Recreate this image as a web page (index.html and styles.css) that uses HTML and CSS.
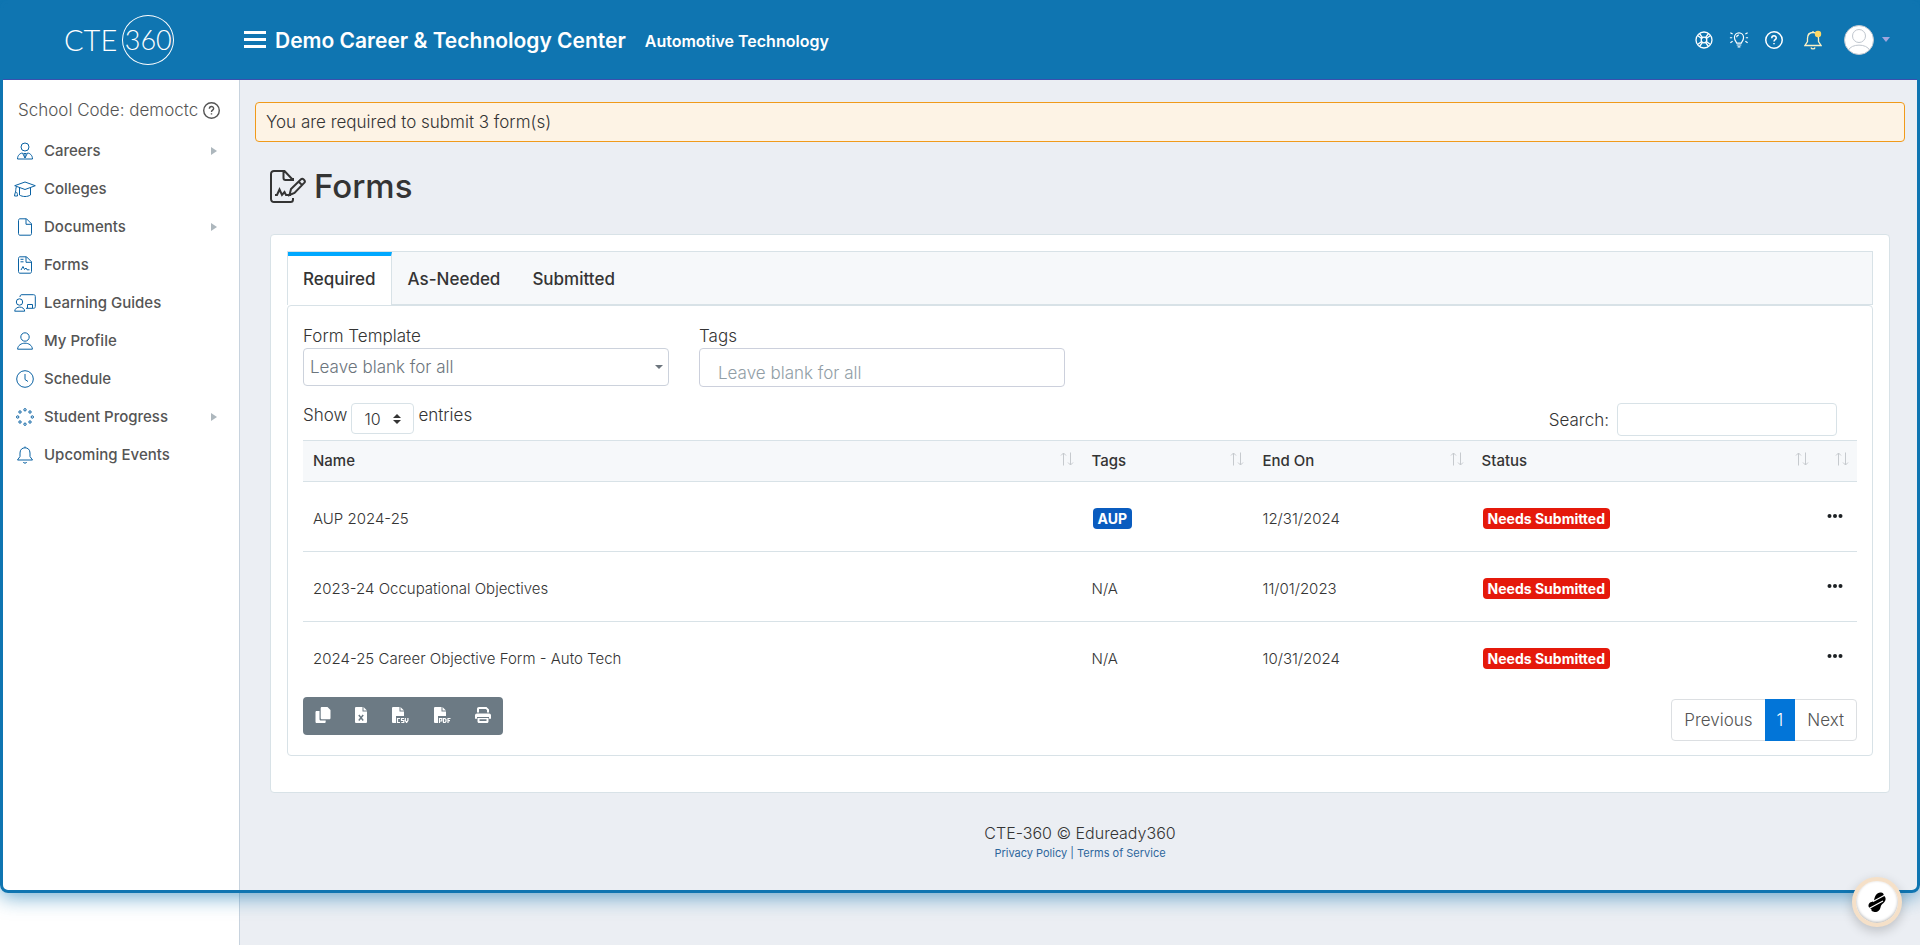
FILE: index.html
```html
<!DOCTYPE html>
<html lang="en">
<head>
    <meta charset="UTF-8">
    <meta name="viewport" content="width=device-width, initial-scale=1.0">
    <title>CTE-360 - Forms</title>
    <link rel="stylesheet" href="styles.css">
</head>
<body>

    <!-- Shared icons -->
    <svg class="sprite" aria-hidden="true">
        <symbol id="i-help" viewBox="0 0 24 24"><circle cx="12" cy="12" r="11"/><path d="M9 9.500c0-4 6-4 6-.3 0 2.400-3 2.300-3 4.800M12 16v1.600"/></symbol>
        <symbol id="i-sort" viewBox="0 0 14 14"><path d="M3.500 13.500V1M1 3.500 3.500 1 6 3.500M10.500 .5V13M8 10.500l2.500 2.500 2.500-2.500"/></symbol>
        <symbol id="i-dots" viewBox="0 0 16 6"><circle cx="2.500" cy="3" r="2"/><circle cx="8" cy="3" r="2"/><circle cx="13.500" cy="3" r="2"/></symbol>
        <symbol id="i-right" viewBox="0 0 6 8"><path d="M0 0l6 4-6 4z"/></symbol>
    </svg>

    <header class="header">
        <a class="logo" href="#"><span>CTE</span><span class="logo-circle">360</span></a>
        <button class="menu-btn" aria-label="Menu"><span></span><span></span><span></span></button>
        <div class="school">Demo Career &amp; Technology Center</div>
        <div class="program">Automotive Technology</div>
        <nav class="header-icons">
            <a href="#" aria-label="Support"><svg class="line" viewBox="0 0 18 18"><circle cx="9" cy="9" r="8"/><circle cx="9" cy="9" r="2.800"/><path d="M2.500 4.500l4.200 3M4.500 2.500l3 4.200M13.500 2.500l-3 4.200M15.500 4.500l-4.200 3M2.500 13.500l4.200-3M4.500 15.500l3-4.200M13.500 15.500l-3-4.200M15.500 13.500l-4.200-3"/></svg></a>
            <a href="#" aria-label="Tips"><svg class="line wide" viewBox="0 0 22 18"><path d="M8.500 12.500C8 10.500 6 9.500 6 6.200a5 5 0 0 1 10 0c0 3.300-2 4.300-2.500 6.300zM8.500 14.500h5M9.500 16.500h3M8.500 6a2.500 2.500 0 0 1 2.500-2.500M1 6.500h2.500M18.500 6.500H21M1.500 1l2.500 1.500M20.500 1 18 2.500M1.500 12 4 10.500M20.500 12 18 10.500"/></svg></a>
            <a href="#" aria-label="Help"><svg class="line help"><use href="#i-help"/></svg></a>
            <a class="bell" href="#" aria-label="Notifications"><svg class="line" viewBox="0 0 18 20"><path d="M1 15.500h16l-2.500-4V8.300C14.500 4.500 12 2.500 9 2.500S3.500 4.500 3.500 8.300v3.200zM9 2.500V1M7 17.500c.4 1.800 3.600 1.800 4 0"/><circle class="dot" cx="14" cy="4" r="3.200"/></svg></a>
            <a class="avatar" href="#" aria-label="Account"><svg viewBox="0 0 30 30"><circle class="avatar-bg" cx="15" cy="15" r="14.500"/><circle cx="15" cy="11" r="6.500"/><path d="M4.500 25c3-6.500 18-6.500 21 0"/></svg><i class="caret"></i></a>
        </nav>
    </header>

    <div class="page">
        <aside class="sidebar">
            <p class="school-code">School Code: democtc <svg><use href="#i-help"/></svg></p>
            <ul class="menu">
                <li><a href="#"><svg viewBox="0 0 22 18"><circle cx="11" cy="5" r="4"/><path d="M3.500 17c0-4 3-6 5-6l2.500 5 2.500-5c2 0 5 2 5 6zM9.500 11.500h3M11 12v4"/></svg>Careers</a><svg class="arrow"><use href="#i-right"/></svg></li>
                <li><a href="#"><svg viewBox="0 0 22 18"><path d="M.7 5.700 11 2l10.300 3.700L11 9.500zM5.500 8v7c3 2 8 2 11 0V8M2.500 6.500c-1 2-.5 4-1 5.500-.7 1.500-.7 2.500-1 4h3c0-2-.3-3-1.200-4"/></svg>Colleges</a></li>
                <li><a href="#"><svg viewBox="0 0 22 18"><path d="M4.500 2.500c0-1 .5-1.700 1.500-1.700h6.500l5 5V15.500c0 1-.5 1.700-1.500 1.700H6c-1 0-1.500-.7-1.500-1.700zM12 .8v5.500h5.500"/></svg>Documents</a><svg class="arrow"><use href="#i-right"/></svg></li>
                <li><a href="#"><svg viewBox="0 0 22 18"><path d="M4.500 2.500c0-1 .5-1.700 1.500-1.700h6.500l5 5V15.500c0 1-.5 1.700-1.500 1.700H6c-1 0-1.500-.7-1.500-1.700zM12 .8v5.500h5.500M6.500 3.300h3M6.500 5.800h3M7 14l2-3.500 1.500 3L12 12l1 1.800h2.500"/></svg>Forms</a></li>
                <li><a href="#"><svg viewBox="0 0 22 18"><path d="M6 3c0-1.500.5-2.300 2-2.300h11.500c1.200 0 1.800.6 1.800 1.800v10c0 1.200-.6 1.800-1.800 1.800H12M13.500 14v-3.500h5V14"/><circle cx="5.500" cy="8" r="3.200"/><path d="M.7 17.200c.5-5.500 9.600-5.500 10 0z"/></svg>Learning Guides</a></li>
                <li><a href="#"><svg viewBox="0 0 22 18"><circle cx="11" cy="5" r="4.200"/><path d="M3.600 17.200c.4-8 14.400-8 14.800 0z"/></svg>My Profile</a></li>
                <li><a href="#"><svg viewBox="0 0 22 18"><circle cx="11" cy="9" r="8.300"/><path d="M11 4v5.500l3 2"/></svg>Schedule</a></li>
                <li><a href="#"><svg viewBox="0 0 22 18"><circle cx="11" cy="1.800" r="1.200"/><circle cx="16" cy="4" r="1.200"/><circle cx="18.300" cy="9" r="1.200"/><circle cx="16" cy="14" r="1.200"/><circle cx="11" cy="16.200" r="1.200"/><circle cx="6" cy="14" r="1.200"/><circle cx="3.700" cy="9" r="1.200"/><circle cx="6" cy="4" r="1.200"/></svg>Student Progress</a><svg class="arrow"><use href="#i-right"/></svg></li>
                <li><a href="#"><svg viewBox="0 0 22 18"><path d="M3.500 14h15L16 10.500V7c0-3.500-2.300-5.200-5-5.200S6 3.500 6 7v3.500zM11 1.800V.5M9.300 16c.3 1.500 3.100 1.500 3.400 0"/></svg>Upcoming Events</a></li>
            </ul>
        </aside>

        <main class="content">
            <div class="alert">You are required to submit 3 form(s)</div>

            <h1 class="title">
                <svg viewBox="0 0 36 33"><path d="M23 8v3M23 28v1.500c0 1.500-1 2.500-2.500 2.500H4c-1.800 0-3-1.200-3-3V4c0-1.800 1.200-3 3-3h10.500L23 10M13.500 1.500V8c0 1.300.8 2 2 2H23M5 25h2l2.500-5.500L12 25l2.500-3 1.500 3h5M19.500 25l1.500-6L31 9.300c1.700-1.600 5 1.500 3.400 3.400L24.500 23zM28.500 11.500l3.600 3.600"/></svg>
                Forms
            </h1>

            <section class="panel">
                <nav class="tabs">
                    <a class="tab active" href="#">Required</a>
                    <a class="tab" href="#">As-Needed</a>
                    <a class="tab" href="#">Submitted</a>
                </nav>

                <div class="tab-body">
                    <div class="filters">
                        <div class="field">
                            <label for="template">Form Template</label>
                            <div class="select">
                                <select id="template"><option>Leave blank for all</option></select>
                                <i class="caret"></i>
                            </div>
                        </div>
                        <div class="field">
                            <label for="tags">Tags</label>
                            <input type="text" id="tags" placeholder="Leave blank for all">
                        </div>
                    </div>

                    <div class="table-top">
                        <div class="length">
                            <label for="length">Show</label>
                            <div class="select small">
                                <select id="length"><option>10</option><option>25</option><option>50</option></select>
                                <svg viewBox="0 0 8 10"><path d="M0 4l4-4 4 4zM0 6h8l-4 4z"/></svg>
                            </div>
                            <span>entries</span>
                        </div>
                        <div class="search">
                            <label for="search">Search:</label>
                            <input type="search" id="search">
                        </div>
                    </div>

                    <table class="table">
                        <thead>
                            <tr>
                                <th class="col-name"><div>Name<svg><use href="#i-sort"/></svg></div></th>
                                <th class="col-tags"><div>Tags<svg><use href="#i-sort"/></svg></div></th>
                                <th class="col-end"><div>End On<svg><use href="#i-sort"/></svg></div></th>
                                <th><div>Status<svg><use href="#i-sort"/></svg></div></th>
                                <th class="col-more"><div><svg><use href="#i-sort"/></svg></div></th>
                            </tr>
                        </thead>
                        <tbody>
                            <tr>
                                <td>AUP 2024-25</td>
                                <td><span class="badge blue">AUP</span></td>
                                <td>12/31/2024</td>
                                <td><span class="badge red">Needs Submitted</span></td>
                                <td><button class="more" aria-label="Actions"><svg><use href="#i-dots"/></svg></button></td>
                            </tr>
                            <tr>
                                <td>2023-24 Occupational Objectives</td>
                                <td>N/A</td>
                                <td>11/01/2023</td>
                                <td><span class="badge red">Needs Submitted</span></td>
                                <td><button class="more" aria-label="Actions"><svg><use href="#i-dots"/></svg></button></td>
                            </tr>
                            <tr>
                                <td>2024-25 Career Objective Form - Auto Tech</td>
                                <td>N/A</td>
                                <td>10/31/2024</td>
                                <td><span class="badge red">Needs Submitted</span></td>
                                <td><button class="more" aria-label="Actions"><svg><use href="#i-dots"/></svg></button></td>
                            </tr>
                        </tbody>
                    </table>

                    <div class="table-bottom">
                        <div class="exports">
                            <button aria-label="Copy"><svg class="w16" viewBox="0 0 16 16"><path d="M7 0h5.500L15.500 3v8c0 .8-.5 1.300-1.300 1.300H7c-.8 0-1.300-.5-1.300-1.300V1.300C5.700.5 6.200 0 7 0zM1.800 4H4.500v8c0 1 .6 1.600 1.600 1.600h4.600v1.100c0 .8-.5 1.300-1.300 1.300H1.800C1 16 .5 15.500.5 14.700V5.300C.5 4.500 1 4 1.800 4z"/></svg></button>
                            <button aria-label="Excel"><svg class="w12" viewBox="2 0 12 16"><path d="M3.300 0H9.500v4.500H14v10.200c0 .8-.5 1.300-1.300 1.300H3.300C2.500 16 2 15.500 2 14.700V1.300C2 .5 2.500 0 3.300 0zM10.500 0 14 3.500h-3.500z"/><path class="cut" d="M5.800 8l4.400 5.500M10.200 8l-4.400 5.500"/></svg></button>
                            <button aria-label="CSV"><svg class="w18" viewBox="0 0 18 16"><path d="M2.300 0H8.500v4.500H13V9H5v7H2.300C1.500 16 1 15.500 1 14.700V1.300C1 .5 1.500 0 2.300 0zM9.500 0 13 3.500H9.500z"/><path class="thin" d="M9 11.500H6.500v4H9M13 11.500h-2.500v2h2.300v2h-2.500M14.300 11v2.500l1.300 2 1.300-2V11"/></svg></button>
                            <button aria-label="PDF"><svg class="w18" viewBox="0 0 18 16"><path d="M2.300 0H8.500v4.500H13V9H5v7H2.300C1.500 16 1 15.500 1 14.700V1.300C1 .5 1.500 0 2.300 0zM9.500 0 13 3.500H9.500z"/><path class="thin" d="M6.500 16v-4.500h2.300v2.500H6.500M10.500 11.500v4H12l1-1v-2l-1-1zM17.500 11.500H15V16M15 13.700h2"/></svg></button>
                            <button aria-label="Print"><svg class="w16" viewBox="0 0 16 16"><path d="M2 5.500V2C2 .8 2.800 0 4 0h7.500L14 2.500v3h-2V3.300L11 2H4v3.500zM2 6.500h12c1.200 0 2 .8 2 2v3.300h-2V10H2v1.800H0V8.500c0-1.200.8-2 2-2zM2.500 11h11v3.500c0 .9-.6 1.500-1.500 1.500H4c-.9 0-1.500-.6-1.500-1.500zM4.500 12.300V14h7v-1.700z" fill-rule="evenodd"/></svg></button>
                        </div>
                        <nav class="pages">
                            <a href="#">Previous</a>
                            <a class="current" href="#">1</a>
                            <a href="#">Next</a>
                        </nav>
                    </div>
                </div>
            </section>

            <footer class="footer">
                <div>CTE-360 &copy; Eduready360</div>
                <div class="links"><a href="#">Privacy Policy</a> | <a href="#">Terms of Service</a></div>
            </footer>
        </main>
    </div>

    <div class="frame"></div>
    <button class="widget" aria-label="Assistant">
        <svg viewBox="0 0 18 20"><path d="M6 9C6.500 4 9 0 13 .5c2 .2 3 1.500 2.700 3.200C18.500 5 18 9 15.500 11c-2 1.500-2.500 2-3 4.500-.8 4-4.500 5.500-7.500 4C3.500 19 3 18 3.500 17 .5 16.500-.5 13 1.500 11c1.300-1.300 2.800-1 4.500-2z"/><path class="slash" d="M5 9.500 17 3M1 16.500l14-7.500"/></svg>
    </button>

</body>
</html>
```
FILE: styles.css
```css
* {
    box-sizing: border-box;
}
body {
    margin: 0;
    font-family: Inter, sans-serif;
    font-size: 17px;
    font-weight: 300;
    line-height: 24px;
    color: #343434;
    background-color: #ebeef3;
}
a {
    color: inherit;
    text-decoration: none;
}
button, input, select {
    font: inherit;
    color: inherit;
}
svg {
    flex: none;
    fill: none;
    stroke: currentColor;
}
.sprite {
    display: none;
}

/* Header */
.header {
    display: flex;
    align-items: center;
    height: 80px;
    padding-right: 30px;
    color: white;
    background-color: #0f75b1;
    border-bottom: 1px solid #3a4fae;
}
.logo {
    display: flex;
    align-items: center;
    gap: 5px;
    width: 244px;
    padding-left: 64px;
    font-family: Lato, sans-serif;
    font-size: 29px;
    font-weight: 300;
}
.logo-circle {
    display: flex;
    align-items: center;
    justify-content: center;
    width: 52px;
    height: 50px;
    font-size: 27px;
    border: 1px solid white;
    border-radius: 50%;
}
.menu-btn {
    display: flex;
    flex-direction: column;
    justify-content: space-between;
    width: 22px;
    height: 17px;
    padding: 0;
    background: none;
    border: none;
    cursor: pointer;
}
.menu-btn span {
    height: 3px;
    background-color: white;
}
.school {
    margin-left: 9px;
    padding-top: 3px;
    font-size: 21px;
    font-weight: 600;
}
.program {
    margin-left: 19px;
    padding-top: 3px;
    font-size: 16px;
    font-weight: 600;
}
.header-icons {
    display: flex;
    align-items: center;
    gap: 16px;
    margin-left: auto;
}
.header-icons a {
    display: flex;
}
.header-icons .line {
    width: 18px;
    height: 18px;
    stroke-width: 1.3;
}
.header-icons .wide {
    width: 20px;
}
.header-icons .help {
    stroke-width: 2;
}
.header-icons .bell {
    margin-left: 5px;
    color: #fdf1c4;
}
.header-icons .bell svg {
    height: 20px;
}
.bell .dot {
    fill: #ffd966;
    stroke: none;
}
.header-icons .avatar {
    align-items: center;
    gap: 8px;
    margin-left: 6px;
    color: #a0a5dd;
}
.avatar svg {
    width: 30px;
    height: 30px;
    stroke: #bfc6ce;
}
.avatar .avatar-bg {
    fill: white;
}
.caret {
    width: 8px;
    height: 5px;
    background-color: currentColor;
    clip-path: polygon(0 0, 100% 0, 50% 100%);
}

/* Sidebar */
.page {
    display: flex;
    min-height: calc(100vh - 80px);
}
.sidebar {
    flex: none;
    width: 240px;
    padding: 18px 16px 0 14px;
    color: #555;
    background-color: white;
    border-right: 1px solid #c8d3de;
}
.school-code {
    display: flex;
    align-items: center;
    gap: 5px;
    margin: 0 0 10px 4px;
    white-space: nowrap;
}
.school-code svg {
    width: 17px;
    height: 17px;
    stroke-width: 2;
}
.menu {
    margin: 0;
    padding: 0;
    list-style: none;
}
.menu li {
    display: flex;
    align-items: center;
    justify-content: space-between;
    height: 38px;
    padding-right: 6px;
}
.menu a {
    display: flex;
    align-items: center;
    gap: 8px;
    font-size: 15px;
    font-weight: 500;
}
.menu a svg {
    width: 22px;
    height: 18px;
    stroke: #0a62a3;
}
.menu .arrow {
    width: 6px;
    height: 8px;
    fill: #adb7bd;
    stroke: none;
}

/* Content */
.content {
    flex: 1;
    padding: 22px 15px 0;
}
.alert {
    height: 40px;
    padding: 7px 10px;
    background-color: #fdf3e5;
    border: 1px solid #f09a1a;
    border-radius: 4px;
}
.title {
    display: flex;
    align-items: center;
    gap: 8px;
    height: 40px;
    margin: 24px 15px 28px;
    font-size: 33px;
    font-weight: 500;
}
.title svg {
    width: 36px;
    height: 33px;
    stroke-width: 2;
}
.panel {
    margin: 0 15px;
    padding: 16px 16px 36px;
    background-color: white;
    border: 1px solid #d8e2e7;
    border-radius: 4px;
}
.tabs {
    display: flex;
    height: 54px;
    background-color: #f6f8fa;
    border: 1px solid #d8e2e7;
}
.tab {
    padding: 15px 16px;
    font-weight: 500;
}
.tab.active {
    margin-bottom: -1px;
    padding: 11px 15px;
    background-color: white;
    border-top: 4px solid #00a8ff;
    border-right: 1px solid #d8e2e7;
}
.tab-body {
    padding: 18px 15px 14px;
    border: 1px solid #d8e2e7;
    border-radius: 4px;
}
.filters {
    display: flex;
    gap: 30px;
}
.field {
    width: 366px;
}
.field label {
    display: block;
}
.select {
    display: grid;
    align-items: center;
    height: 38px;
}
.select > * {
    grid-area: 1 / 1;
}
.select select {
    width: 100%;
    height: 100%;
    padding: 0 6px;
    color: #6c757d;
    background-color: white;
    border: 1px solid #ccd2dc;
    border-radius: 4px;
    appearance: none;
}
.select .caret {
    justify-self: end;
    margin-right: 6px;
    height: 4px;
    color: #6c757d;
}
.field input {
    width: 100%;
    height: 39px;
    padding: 10px 18px 0;
    border: 1px solid #ccd0dc;
    border-radius: 4px;
}
.field input::placeholder {
    color: #919ea6;
}
.table-top {
    display: flex;
    align-items: flex-start;
    justify-content: space-between;
    height: 53px;
    padding: 16px 20px 0 0;
}
.length, .search {
    display: flex;
    align-items: center;
    gap: 5px;
}
.length {
    align-items: flex-start;
    gap: 4px;
}
.select.small {
    width: 63px;
    height: 31px;
}
.select.small select {
    padding: 0 12px;
    font-size: 16px;
    color: #343434;
    border-color: #d8e2e7;
}
.select.small svg {
    justify-self: end;
    width: 8px;
    height: 10px;
    margin-right: 13px;
    fill: #343434;
    stroke: none;
}
.search {
    gap: 8px;
}
.search input {
    width: 220px;
    height: 33px;
    border: 1px solid #d8e2e7;
    border-radius: 4px;
}
.table {
    width: 100%;
    table-layout: fixed;
    border-collapse: collapse;
    font-size: 15px;
}
.table th {
    height: 41px;
    padding: 0 8px 0 10px;
    font-weight: 500;
    text-align: left;
    background-color: #f6f8fa;
    border: solid #d8e2e7;
    border-width: 1px 0;
}
.table th div {
    display: flex;
    align-items: center;
    justify-content: space-between;
}
.table th svg {
    width: 14px;
    height: 14px;
    margin: 0 0 4px auto;
    color: #c6cace;
}
.table td {
    height: 70px;
    padding: 4px 10px 0;
    border-bottom: 1px solid #d8e2e7;
}
.table tbody tr:last-child td {
    border-bottom: none;
}
.col-name { width: 50.1%; }
.col-tags { width: 11%; }
.col-end { width: 14.1%; }
.table .col-more {
    width: 40px;
    padding: 0 8px;
}
.badge {
    display: inline-block;
    margin-left: 1px;
    padding: 0 5px;
    font-size: 14px;
    line-height: 21px;
    font-weight: 700;
    color: white;
    border-radius: 4px;
}
.blue { background-color: #0a5cbf; }
.red { background-color: #e5190b; }
.table .more {
    display: flex;
    padding: 0;
    margin: 0 0 6px;
    background: none;
    border: none;
    cursor: pointer;
}
.more svg {
    width: 16px;
    height: 6px;
    fill: #1d2124;
    stroke: none;
}
.table-bottom {
    display: flex;
    align-items: flex-start;
    justify-content: space-between;
    padding-top: 5px;
}
.exports {
    display: flex;
    height: 38px;
    background-color: #6c7a84;
    border-radius: 4px;
    overflow: hidden;
}
.exports button {
    display: flex;
    align-items: center;
    padding: 0 12px 2px;
    color: white;
    background: none;
    border: none;
    cursor: pointer;
}
.exports svg {
    height: 16px;
    fill: currentColor;
    stroke: none;
}
.w12 { width: 12px; }
.w16 { width: 16px; }
.w18 { width: 18px; }
.exports .cut {
    stroke: #6c7a84;
    stroke-width: 1.5;
}
.exports .thin {
    fill: none;
    stroke: white;
    stroke-width: 1.2;
}
.pages {
    display: flex;
    height: 42px;
    margin-top: 2px;
    color: #555;
    line-height: 40px;
    border: 1px solid #dcdfe2;
    border-radius: 4px;
}
.pages a {
    padding: 0 12px;
}
.pages .current {
    margin: -1px 0;
    line-height: 42px;
    color: white;
    background-color: #0275d8;
}
.footer {
    padding-top: 28px;
    font-size: 16px;
    text-align: center;
}
.links {
    font-size: 11px;
    line-height: 16px;
    font-weight: 400;
    color: #2d669c;
}

/* Screen frame and assistant button lie over the page */
.frame {
    position: fixed;
    inset: 0 0 52px;
    border: 3px solid #0f75b1;
    border-radius: 8px;
    box-shadow: 0 4px 20px rgba(15, 117, 177, 0.6);
    pointer-events: none;
}
.widget {
    position: fixed;
    right: 18px;
    bottom: 18px;
    display: flex;
    align-items: center;
    justify-content: center;
    width: 50px;
    height: 50px;
    padding: 0;
    background-color: white;
    border: 4px solid #f5e0c8;
    border-radius: 50%;
    box-shadow: 0 4px 12px rgba(0, 0, 0, 0.2), inset 0 -1px 3px rgba(0, 0, 0, 0.3);
    cursor: pointer;
}
.widget svg {
    width: 18px;
    height: 20px;
    fill: black;
    stroke: none;
}
.widget .slash {
    stroke: white;
    stroke-width: 1.2;
}
```
